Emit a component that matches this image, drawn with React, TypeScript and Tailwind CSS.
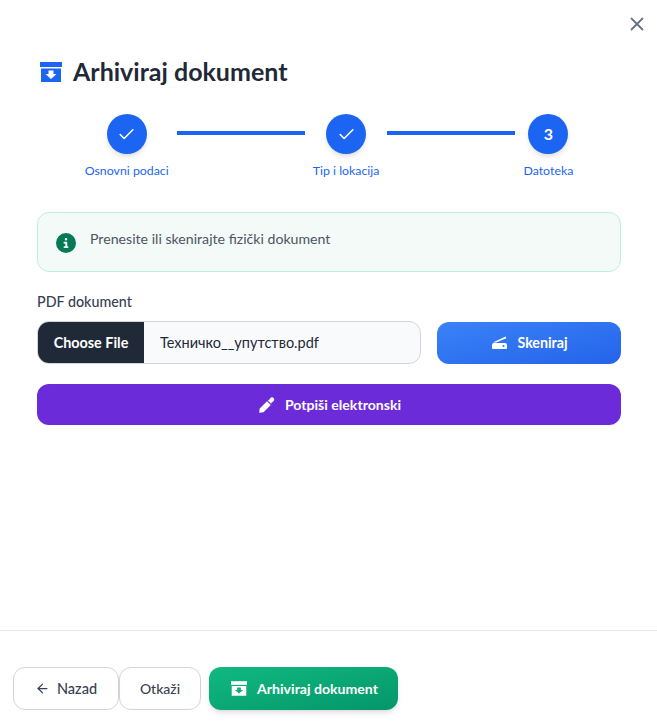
import { ArrowLeft, Check, X } from 'lucide-react';
import { FaCircleInfo } from 'react-icons/fa6';

function ArchiveIcon({ className }: { className?: string }) {
  return (
    <svg viewBox="0 0 22 20" fill="currentColor" className={className}>
      <rect x="0" y="0" width="22" height="5" />
      <path fillRule="evenodd" d="M1 6.5h20V20H1V6.5ZM8.5 8.5v3.5H5.5L11 17l5.5-5H13.5V8.5h-5Z" />
    </svg>
  );
}

function ScannerIcon() {
  return (
    <svg viewBox="0 0 15 13" fill="currentColor" className="h-[13px] w-[15px]">
      <path d="M13.6.4l.8 1.800L4 6.500H.8L13.6.4Z" />
      <path fillRule="evenodd" d="M2 7h11a2 2 0 0 1 2 2v3a1 1 0 0 1-1 1H1a1 1 0 0 1-1-1V9a2 2 0 0 1 2-2Zm9.500 1.900a1.100 1.100 0 1 0 0 2.200 1.100 1.100 0 0 0 0-2.200Z" />
    </svg>
  );
}

function MarkerIcon() {
  return (
    <svg viewBox="0 0 16 16" fill="currentColor" className="h-4 w-4">
      <path d="M.2 15.800l.5-4.300L8 4.200l3.800 3.800-7.300 7.300-4.300.5Z" />
      <path d="M8.800 3.400l1.200-.4 1-1.600c1-1.200 2.600-1.400 3.600-.4s.8 2.600-.4 3.600l-1.600 1-.4 1.200-3.400-3.400Z" />
    </svg>
  );
}

const steps = [
  { label: 'Osnovni podaci', done: true },
  { label: 'Tip i lokacija', done: true },
  { label: 'Datoteka', done: false },
];

export default function App() {
  return (
    <div
      className="relative flex h-[725px] flex-col bg-white text-[#1f2937]"
      style={{ fontFamily: 'Lato, "Noto Sans", sans-serif' }}
    >
      <button className="absolute right-[9px] top-[13px] text-[#6b7280]">
        <X className="h-[22px] w-[22px]" strokeWidth={2} />
      </button>

      <div className="flex-1 pl-[37px] pr-[36px] pt-[58px]">
        <div className="flex items-center gap-[11px] pl-[3px]">
          <ArchiveIcon className="mt-[2px] h-[22px] w-[22px] text-[#1c64f2]" />
          <h1 className="text-[25px] font-bold leading-[26px]">Arhiviraj dokument</h1>
        </div>

        <div className="mt-[30px] flex justify-center">
          {steps.map((step, i) => (
            <div key={step.label} className="flex items-start">
              {i > 0 && <div className="mx-2 mt-[17px] h-1 w-32 bg-[#1c64f2]" />}
              <div className="flex flex-col items-center">
                <div className="flex h-10 w-10 items-center justify-center rounded-full bg-[#1c64f2] font-bold text-white shadow-md">
                  {step.done ? <Check className="h-[19px] w-[19px]" strokeWidth={2} /> : '3'}
                </div>
                <span className="mt-[8px] text-[12.35px] leading-[18px] text-[#1c64f2]">{step.label}</span>
              </div>
            </div>
          ))}
        </div>

        <div className="mt-[32px] flex h-[60px] items-center gap-[14px] rounded-xl border border-[#bcf0da] bg-[#f3faf7] px-[18px]">
          <FaCircleInfo className="mt-[2px] h-[20px] w-[20px] text-[#057a55]" />
          <span className="-mt-[7px] text-[14.15px] text-[#4b5563]">Prenesite ili skenirajte fizički dokument</span>
        </div>

        <label className="mt-[20px] block text-[14.3px] font-medium leading-[20px] text-[#374151]">PDF dokument</label>
        <div className="mt-[9px] flex items-center gap-4">
          <div className="flex h-[43px] flex-1 items-center overflow-hidden rounded-xl border border-[#d1d5db] bg-[#f9fafb]">
            <span className="flex h-full w-[106px] items-center justify-center bg-[#1f2937] text-[14.4px] font-bold text-white">Choose File</span>
            <span className="pl-4 text-[14.5px] text-[#1f2937]">Техничко__упутство.pdf</span>
          </div>
          <button className="flex h-[42px] w-[184px] items-center justify-center gap-[10px] rounded-xl bg-gradient-to-br from-[#3b82f6] to-[#2563eb] pl-[2px] text-[14.2px] font-bold text-white">
            <ScannerIcon />
            Skeniraj
          </button>
        </div>

        <button className="mt-[20px] flex h-[41px] w-full items-center justify-center gap-[10px] rounded-xl bg-[#6c2bd9] pl-[2px] text-[14.1px] font-bold text-white">
          <MarkerIcon />
          Potpiši elektronski
        </button>
      </div>

      <div className="flex h-[95px] gap-2 border-t border-[#e5e7eb] px-[13px] pt-[36px]">
        <div className="flex">
          <button className="flex h-[43px] w-[106px] items-center justify-center gap-[7px] rounded-xl border border-[#d1d5db] bg-white text-[14.5px] font-medium text-[#374151]">
            <ArrowLeft className="h-[15px] w-[15px]" strokeWidth={2} />
            Nazad
          </button>
          <button className="h-[43px] w-[82px] rounded-xl border border-[#d1d5db] bg-white text-sm font-medium text-[#374151]">
            Otkaži
          </button>
        </div>
        <button className="flex h-[43px] w-[189px] items-center justify-center gap-[10px] rounded-xl bg-gradient-to-br from-[#10b981] to-[#059669] pl-[2px] text-[14.1px] font-bold text-white shadow-md">
          <ArchiveIcon className="h-[15px] w-[16px]" />
          Arhiviraj dokument
        </button>
      </div>
    </div>
  );
}
